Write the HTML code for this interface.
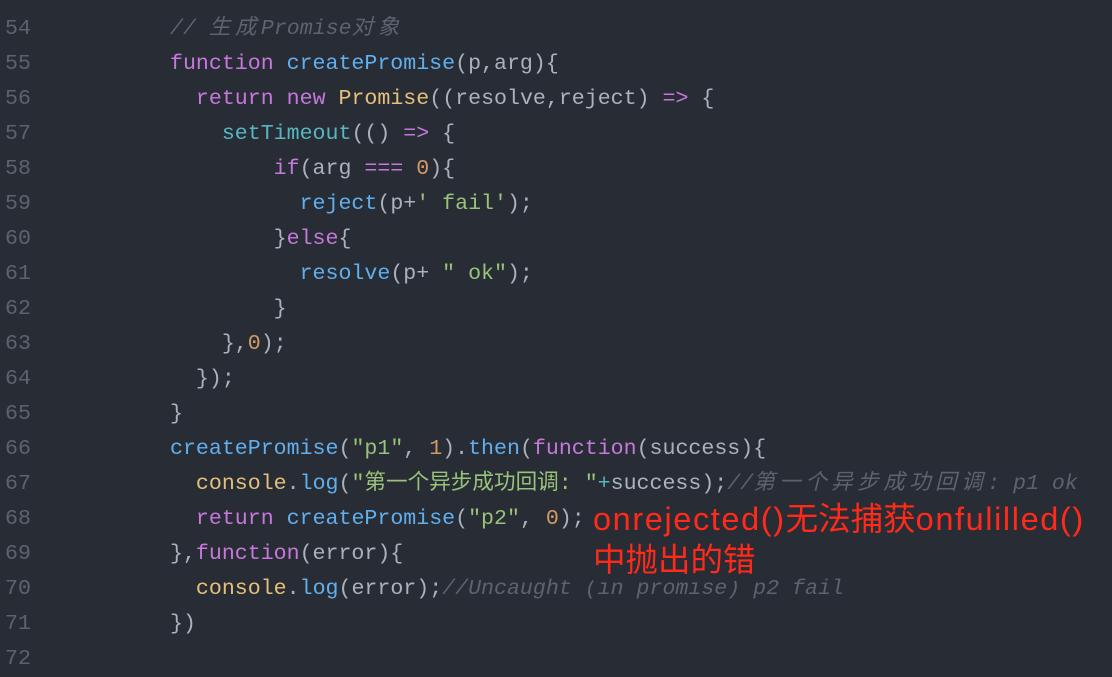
<!DOCTYPE html>
<html><head><meta charset="utf-8"><style>
html,body{margin:0;padding:0;width:1112px;height:675px;overflow:hidden;background:#282c34;}
.r{position:absolute;left:0;height:35px;line-height:35px;width:1112px;font-family:"Liberation Mono","Noto Sans CJK SC",monospace;font-size:21.6px;color:#abb2bf;white-space:pre;}
.n{position:absolute;left:5px;color:#5c6370;}
.c{position:absolute;left:170px;}
.k{color:#c678dd}.f{color:#61afef}.y{color:#e5c07b}.t{color:#56b6c2}.s{color:#98c379}.o{color:#d19a66}.m{color:#5c6370;font-style:italic}
.w{letter-spacing:4.4px}
.red{position:absolute;left:593px;color:#ff2a1a;font-family:"Liberation Sans","Noto Sans CJK SC",sans-serif;font-size:32.5px;line-height:41px;white-space:nowrap}
.l{letter-spacing:1.6px}
</style></head><body>
<div class="r" style="top:-23.5px"><span class="n">53</span></div>
<div class="r" style="top:11.5px"><span class="n">54</span><span class="c"><span class="m">// <span class="w">生成</span>Promise<span class="w">对象</span></span></span></div>
<div class="r" style="top:46.5px"><span class="n">55</span><span class="c"><span class="k">function</span> <span class="f">createPromise</span>(p,arg){</span></div>
<div class="r" style="top:81.5px"><span class="n">56</span><span class="c">  <span class="k">return</span> <span class="k">new</span> <span class="y">Promise</span>((resolve,reject) <span class="k">=&gt;</span> {</span></div>
<div class="r" style="top:116.5px"><span class="n">57</span><span class="c">    <span class="t">setTimeout</span>(() <span class="k">=&gt;</span> {</span></div>
<div class="r" style="top:151.5px"><span class="n">58</span><span class="c">        <span class="k">if</span>(arg <span class="k">===</span> <span class="o">0</span>){</span></div>
<div class="r" style="top:186.5px"><span class="n">59</span><span class="c">          <span class="f">reject</span>(p+<span class="s">' fail'</span>);</span></div>
<div class="r" style="top:221.5px"><span class="n">60</span><span class="c">        }<span class="k">else</span>{</span></div>
<div class="r" style="top:256.5px"><span class="n">61</span><span class="c">          <span class="f">resolve</span>(p+ <span class="s">" ok"</span>);</span></div>
<div class="r" style="top:291.5px"><span class="n">62</span><span class="c">        }</span></div>
<div class="r" style="top:326.5px"><span class="n">63</span><span class="c">    },<span class="o">0</span>);</span></div>
<div class="r" style="top:361.5px"><span class="n">64</span><span class="c">  });</span></div>
<div class="r" style="top:396.5px"><span class="n">65</span><span class="c">}</span></div>
<div class="r" style="top:431.5px"><span class="n">66</span><span class="c"><span class="f">createPromise</span>(<span class="s">"p1"</span>, <span class="o">1</span>).<span class="f">then</span>(<span class="k">function</span>(success){</span></div>
<div class="r" style="top:466.5px"><span class="n">67</span><span class="c">  <span class="y">console</span>.<span class="f">log</span>(<span class="s">"第一个异步成功回调: "</span><span class="t">+</span>success);<span class="m">//<span class="w">第一个异步成功回调</span>: p1 ok</span></span></div>
<div class="r" style="top:501.5px"><span class="n">68</span><span class="c">  <span class="k">return</span> <span class="f">createPromise</span>(<span class="s">"p2"</span>, <span class="o">0</span>);</span></div>
<div class="r" style="top:536.5px"><span class="n">69</span><span class="c">},<span class="k">function</span>(error){</span></div>
<div class="r" style="top:571.5px"><span class="n">70</span><span class="c">  <span class="y">console</span>.<span class="f">log</span>(error);<span class="m">//Uncaught (in promise) p2 fail</span></span></div>
<div class="r" style="top:606.5px"><span class="n">71</span><span class="c">})</span></div>
<div class="r" style="top:641.5px"><span class="n">72</span></div>
<div class="red" style="top:499px;background:#282c34"><span class="l">onrejected()</span>无法捕获<span class="l">onfulilled()</span></div>
<div class="red" style="top:540px;background:#282c34">中抛出的错</div>
</body></html>
